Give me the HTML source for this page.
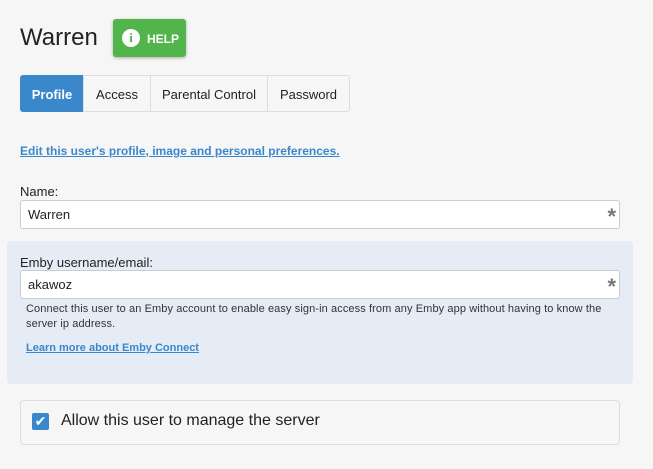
<!DOCTYPE html>
<html><head><style>
body{margin:0;width:653px;height:469px;background:#f6f6f6;font-family:"Liberation Sans",sans-serif;position:relative;overflow:hidden;color:#222}
.a{position:absolute}
.tab{position:absolute;top:75px;height:37px;line-height:37px;text-align:center;font-size:13px;background:#f6f6f6;border:1px solid #ddd;box-sizing:border-box;color:#222}
.inp{position:absolute;left:20px;width:600px;background:#fff;border:1px solid #ccc;border-radius:3px;box-sizing:border-box;font-size:13px;padding-left:7px}
.star{position:absolute;right:3px;top:2px;color:#777;font-size:22px;font-weight:bold;line-height:27px}
</style></head><body>
<div class="a" style="left:20px;top:24px;font-size:24px;color:#222;font-weight:300">Warren</div>
<div class="a" style="left:113px;top:19px;width:73px;height:38px;background:#52b54b;border-radius:3px;box-shadow:0 1px 3px rgba(0,0,0,.3)">
<div class="a" style="left:9px;top:10px;width:18px;height:18px;border-radius:50%;background:#fff;color:#52b54b;font-weight:bold;font-size:13px;text-align:center;line-height:18px;font-family:'Liberation Serif',serif">i</div>
<div class="a" style="left:34px;top:13px;color:#fff;font-weight:bold;font-size:12px">HELP</div></div>
<div class="tab" style="left:20px;width:64px;background:#3a87cc;border-color:#3a87cc;color:#fff;font-weight:bold;border-radius:3px 0 0 3px">Profile</div>
<div class="tab" style="left:83px;width:68px">Access</div>
<div class="tab" style="left:150px;width:118px">Parental Control</div>
<div class="tab" style="left:267px;width:83px;border-radius:0 3px 3px 0">Password</div>
<div class="a" style="left:20px;top:144px;font-size:12px;font-weight:bold;color:#3a87cc;text-decoration:underline">Edit this user's profile, image and personal preferences.</div>
<div class="a" style="left:20px;top:184px;font-size:13px">Name:</div>
<div class="inp" style="top:200px;height:29px;line-height:27px">Warren<span class="star">*</span></div>
<div class="a" style="left:7px;top:241px;width:626px;height:143px;background:#e6ecf5;border-radius:4px"></div>
<div class="a" style="left:20px;top:255px;font-size:13px">Emby username/email:</div>
<div class="inp" style="top:270px;height:29px;line-height:27px">akawoz<span class="star">*</span></div>
<div class="a" style="left:26px;top:302px;width:592px;font-size:11px;line-height:15px;color:#333;letter-spacing:0.1px">Connect this user to an Emby account to enable easy sign-in access from any Emby app without having to know the server ip address.</div>
<div class="a" style="left:26px;top:342px;font-size:11px;font-weight:bold;color:#3a87cc;text-decoration:underline">Learn more about Emby Connect</div>
<div class="a" style="left:20px;top:400px;width:600px;height:45px;border:1px solid #ddd;border-radius:4px;box-sizing:border-box;background:#f6f6f6"></div>
<div class="a" style="left:32px;top:413px;width:17px;height:17px;background:#3a87cc;border-radius:2px;color:#fff;font-size:14px;line-height:17px;text-align:center">✔</div>
<div class="a" style="left:61px;top:412px;font-size:16px;color:#222">Allow this user to manage the server</div>
</body></html>
